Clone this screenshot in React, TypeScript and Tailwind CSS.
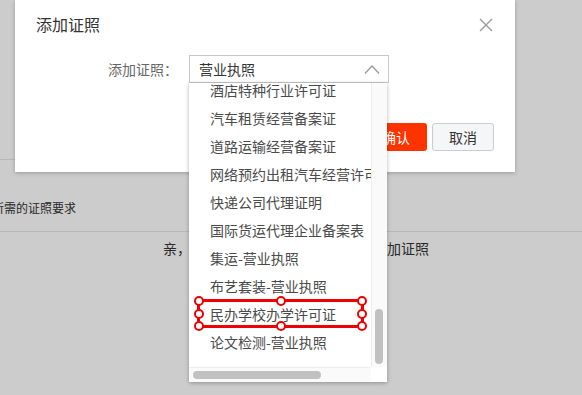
import React from "react";

const items = [
  "酒店特种行业许可证",
  "汽车租赁经营备案证",
  "道路运输经营备案证",
  "网络预约出租汽车经营许可证",
  "快递公司代理证明",
  "国际货运代理企业备案表",
  "集运-营业执照",
  "布艺套装-营业执照",
  "民办学校办学许可证",
  "论文检测-营业执照",
];

function Handle({ className }: { className: string }) {
  return (
    <div
      className={
        "absolute w-[10px] h-[10px] rounded-full bg-white border-2 border-[#ee0000] " +
        className
      }
    />
  );
}

export default function App() {
  return (
    <div
      className="relative w-[582px] h-[395px] overflow-hidden bg-[#cccccc] text-[#292929]"
      style={{ fontFamily: '"Noto Sans CJK SC", "Noto Sans", sans-serif' }}
    >
      {/* background page */}
      <div className="w-[300px] h-[160px] border-b border-[#b8b8b8]" />
      <div className="h-[72px] border-b border-[#b8b8b8] flex flex-col justify-end pb-[15px]">
        <div className="ml-[-8px] text-[12px] leading-[16px] whitespace-nowrap">
          所需的证照要求
        </div>
      </div>
      <div className="pt-[6px] pl-[163px] text-[14px] leading-[20px] whitespace-nowrap">
        亲，您还没有任何证照信息，请先添加证照
      </div>

      {/* modal */}
      <div className="absolute left-[15px] top-0 w-[500px] h-[172px] bg-white shadow-[0_1px_4px_rgba(0,0,0,0.25)] flex flex-col">
        <div className="pl-[21px] pt-[12px] text-[16px] leading-[24px] text-[#333]">
          添加证照
        </div>
        <svg
          className="absolute right-[22px] top-[18px]"
          width="14"
          height="14"
          viewBox="0 0 14 14"
        >
          <path d="M1 1 L13 13 M13 1 L1 13" stroke="#999" strokeWidth="1.4" fill="none" />
        </svg>
        <div className="mt-[19px] flex items-center">
          <div className="ml-[93px] text-[14px] text-[#666] leading-[20px] whitespace-nowrap">
            添加证照：
          </div>
          <div className="ml-[11px] w-[200px] h-[28px] border border-[#c8c8c8] flex items-center justify-between pl-[9px] pr-[8px]">
            <span className="text-[14px] text-[#333] leading-[20px]">营业执照</span>
            <svg width="16" height="9" viewBox="0 0 16 9">
              <polyline points="1,8.5 8,1 15,8.5" stroke="#999" strokeWidth="1.2" fill="none" />
            </svg>
          </div>
        </div>
        <div className="mt-[40px] flex justify-end pr-[21px] gap-[5px]">
          <div className="w-[62px] h-[28px] rounded-[3px] bg-[#ff3300] text-white text-[14px] flex items-center justify-center">
            确认
          </div>
          <div className="w-[62px] h-[28px] rounded-[3px] bg-[#f5f6f8] border border-[#c9ccd1] text-[#333] text-[14px] flex items-center justify-center">
            取消
          </div>
        </div>
      </div>

      {/* dropdown */}
      <div className="absolute left-[189px] top-[83px] w-[198px] h-[299px] bg-white shadow-[0_1px_4px_rgba(0,0,0,0.3)] flex flex-col">
        <div className="flex h-[284px]">
          <div className="w-[182px] h-full overflow-hidden">
            <div className="mt-[-7px]">
              {items.map((t) => (
                <div
                  key={t}
                  className="h-[28px] leading-[28px] pl-[21px] text-[14px] text-[#4a4a4a] whitespace-nowrap"
                >
                  {t}
                </div>
              ))}
            </div>
          </div>
          <div className="w-[16px] h-full border-l border-[#ededed] bg-[#fafafa] pt-[226px] pl-[3px]">
            <div className="w-[8px] h-[55px] rounded-full bg-[#c1c1c1]" />
          </div>
        </div>
        <div className="flex h-[15px]">
          <div className="w-[182px] h-full border-t border-[#ededed] bg-[#fafafa] pt-[3px] pl-[4px]">
            <div className="w-[128px] h-[8px] rounded-full bg-[#c1c1c1]" />
          </div>
          <div className="w-[16px] h-full bg-white" />
        </div>
      </div>

      {/* annotation */}
      <div className="absolute left-[197px] top-[299px] w-[167px] h-[29px]">
        <div className="absolute inset-0 border-[3px] border-[#ee0000]" />
        <Handle className="left-[-3px] top-[-3px]" />
        <Handle className="left-[calc(50%-5px)] top-[-3px]" />
        <Handle className="right-[-3px] top-[-3px]" />
        <Handle className="left-[-3px] top-[calc(50%-5px)]" />
        <Handle className="right-[-3px] top-[calc(50%-5px)]" />
        <Handle className="left-[-3px] bottom-[-3px]" />
        <Handle className="left-[calc(50%-5px)] bottom-[-3px]" />
        <Handle className="right-[-3px] bottom-[-3px]" />
      </div>
    </div>
  );
}
